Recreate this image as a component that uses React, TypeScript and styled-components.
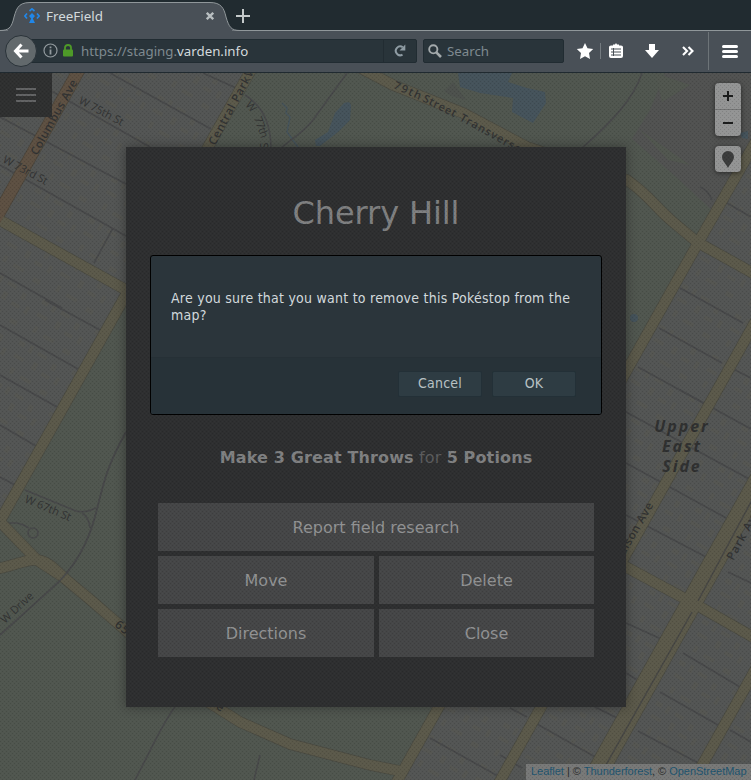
import React from 'react';
import styled, { createGlobalStyle } from 'styled-components';

const GlobalStyle = createGlobalStyle`
  * { box-sizing: border-box; }
  body { margin: 0; background: #4f534e; overflow: hidden; }
  button { font: inherit; letter-spacing: inherit; border: 0; padding: 0; margin: 0; }
`;

const Window = styled.div`
  display: flex;
  flex-direction: column;
  width: 751px;
  height: 780px;
  overflow: hidden;
  font-family: 'DejaVu Sans', sans-serif;
`;

/* ---------- browser chrome ---------- */
const TabStrip = styled.div`
  position: relative;
  display: flex;
  height: 31px;
  background: #212b30;
  border-bottom: 1px solid #90979a;
  font-family: 'Noto Sans', sans-serif;
`;
const TabShape = styled.svg`
  position: absolute;
  left: 0;
  top: 0;
`;
const Tab = styled.div`
  position: relative;
  display: flex;
  align-items: center;
  width: 232px;
  height: 31px;
  padding: 1px 18px 0 24px;
  color: #d3dadd;
  font-size: 13.4px;
  line-height: 18px;
`;
const TabTitle = styled.span`
  flex: 1;
  margin-left: 6px;
`;
const NewTab = styled.svg`
  position: relative;
  margin: 9px 0 0 4px;
`;
const Toolbar = styled.div`
  position: relative;
  display: flex;
  align-items: center;
  height: 42px;
  padding: 0 0 2px 5px;
  background: #495057;
  border-bottom: 1px solid #202a30;
  font-family: 'Noto Sans', sans-serif;
  font-size: 13.3px;
  color: #7f8a90;
  & > * { flex: none; }
`;
const BackButton = styled.button`
  position: relative;
  z-index: 1;
  display: flex;
  align-items: center;
  justify-content: center;
  width: 32px;
  height: 32px;
  border: 1px solid #2a3339;
  border-radius: 50%;
  background: #62696c;
`;
const Field = styled.div<{ $w: number }>`
  display: flex;
  align-items: center;
  width: ${(p) => p.$w}px;
  height: 24px;
  border: 1px solid #212c32;
  border-radius: 2px;
  background: #29343a;
`;
const UrlField = styled(Field)`
  margin-left: -8px;
  padding-left: 13px;
  svg { flex: none; }
`;
const LockIcon = styled.svg`
  margin-left: 5px;
`;
const Url = styled.span`
  flex: 1;
  margin-left: 8px;
  line-height: 18px;
  white-space: nowrap;
  b { font-weight: 400; color: #d3dadd; }
`;
const Reload = styled.div`
  display: flex;
  align-items: center;
  justify-content: center;
  width: 33px;
  height: 22px;
  border-left: 1px solid #222c32;
`;
const SearchField = styled(Field)`
  margin-left: 6px;
  padding-left: 4px;
  gap: 5px;
`;
const ToolIcons = styled.svg`
  margin-left: 6px;
`;

/* ---------- page ---------- */
const Page = styled.main`
  position: relative;
  display: flex;
  align-items: flex-start;
  justify-content: center;
  height: 707px;
  padding-top: 74px;
  overflow: hidden;
`;
const MapCanvas = styled.svg`
  position: absolute;
  inset: 0;
`;
const Mesh = styled.svg`
  position: absolute;
  inset: 0;
  pointer-events: none;
`;
const MenuButton = styled.button`
  position: absolute;
  left: 0;
  top: 0;
  display: flex;
  flex-direction: column;
  justify-content: center;
  gap: 4px;
  width: 52px;
  height: 44px;
  padding: 0 16px;
  background: #2f3030;
`;
const MenuLine = styled.span`
  height: 2px;
  background: #626364;
`;
const Controls = styled.div`
  position: absolute;
  right: 10px;
  top: 10px;
  display: flex;
  flex-direction: column;
  gap: 10px;
`;
const ControlGroup = styled.div`
  display: flex;
  flex-direction: column;
  border-radius: 4px;
  overflow: hidden;
  background: #939494;
  box-shadow: 0 1px 5px rgba(0, 0, 0, 0.5);
`;
const ControlButton = styled.button`
  display: flex;
  align-items: center;
  justify-content: center;
  width: 26px;
  height: 26px;
  background: transparent;
  & + & { height: 27px; border-top: 1px solid #737474; }
`;
const Attribution = styled.div`
  position: absolute;
  right: 0;
  bottom: 0;
  width: 225px;
  height: 16px;
  padding-left: 5px;
  background: #777877;
  color: #2b2c2c;
  font: 11px/15px 'Liberation Sans', Arial, sans-serif;
  letter-spacing: -0.02px;
  white-space: nowrap;
`;
const Link = styled.a`
  color: #1f5570;
`;
const Panel = styled.section`
  position: relative;
  display: flex;
  flex-direction: column;
  width: 500px;
  height: 560px;
  left: 0.5px;
  padding: 44px 32px 50px;
  background: #2e2f30;
  box-shadow: 0 0 10px rgba(20, 20, 20, 0.45);
  text-align: center;
`;
const Title = styled.h1`
  margin: 0;
  color: #7e7f80;
  font-size: 32px;
  font-weight: 400;
  line-height: 45px;
  letter-spacing: -0.1px;
`;
const Research = styled.p`
  margin: auto 0 35px;
  color: #5b5c5d;
  font-size: 16px;
  line-height: 20px;
  letter-spacing: 0.14px;
  b { color: #7f8081; }
`;
const Actions = styled.div`
  display: grid;
  grid-template-columns: 216px 215px;
  gap: 5px;
`;
const Action = styled.button<{ $wide?: boolean }>`
  grid-column: ${(p) => (p.$wide ? '1 / -1' : 'auto')};
  height: 48px;
  background: #454647;
  color: #919293;
  font-size: 16px;
`;
const Dialog = styled.div`
  position: absolute;
  left: 150px;
  top: 182px;
  display: flex;
  flex-direction: column;
  width: 452px;
  height: 160px;
  border: 1px solid #000;
  border-radius: 3px;
  background: #2b353b;
  color: #d2d9dc;
  font-family: 'DejaVu Sans Condensed', 'DejaVu Sans', sans-serif;
  font-stretch: condensed;
  font-size: 14px;
  letter-spacing: 0.24px;
  overflow: hidden;
`;
const Message = styled.div`
  flex: 1;
  padding: 34px 18px 0 20px;
  line-height: 17px;
`;
const DialogFooter = styled.div`
  display: flex;
  justify-content: flex-end;
  gap: 10px;
  height: 57px;
  padding: 13px 25px 0;
  background: #273238;
  border-top: 1px solid #263036;
`;
const DialogButton = styled.button`
  display: flex;
  justify-content: center;
  width: 84px;
  height: 26px;
  border: 1px solid #233037;
  border-radius: 2px;
  background: #2e3c43;
  color: #b8c1c4;
  line-height: 22px;
`;

const AVENUES = [
  'M252 68L0 521', 'M-6 217L128 291',
  'M0 522L8 530L37 560L63 577L93 602L130 634L205 700L240 722L290 744L370 765L405 772',
  'M-5 569C10 567 24 560 34 560C46 560 52 566 63 577',
  'M760 134L698 243L380 812', 'M760 313L490 799',
  'M345 60L393 85L463 113L527 147L627 180C650 196 654 206 673 222L697 242L760 277',
  'M600 553L693 603L760 641', 'M760 661L680 805',
];
const STREETS = [
  'M110 73L211 129', 'M203 73L236 88', 'M20 73L53 92L150 147', 'M0 117L126 184', 'M0 165L126 236',
  'M0 273L62 308', 'M113 228L94 263', 'M45 300L100 330', 'M0 325L78 369', 'M0 375L57 407',
  'M0 425L36 446', 'M0 477L15 485', 'M727 203L751 217', 'M680 288L743 323', 'M659 328L722 363',
  'M638 367L707 405', 'M733 369L751 378', 'M680 390L751 429', 'M626 412L751 480', 'M626 463L728 519',
  'M626 515L708 558', 'M728 572L751 583', 'M626 623L670 643', 'M683 653L740 687', 'M626 673L639 681',
  'M660 692L718 725', 'M595 707L617 718', 'M638 731L700 764', 'M510 708L527 717', 'M537 724L620 771',
  'M730 730L751 742', 'M500 755L522 768', 'M430 738L505 780',
];
const PATHS = [
  'M245 95C260 104 271 120 271 149', 'M347 73L313 120C304 132 290 140 280 149', 'M642 73C634 98 612 122 582 148',
  'M126 432C106 468 104 482 96 513C88 545 72 571 51 589L0 635', 'M25 490L76 511C88 514 92 509 96 508',
  'M82 513Q89 517 90 528', 'M7 523L17 523Q23 524 29 528', 'M175 707C162 724 155 742 135 780',
  'M700 187Q708 190 712 200', 'M260 755L254 780',
];

type LabelProps = { x: number; y: number; r: number; len: number; size?: number; bold?: boolean; children: string };
const MapLabel = ({ x, y, r, len, size = 11, bold, children }: LabelProps) => (
  <text transform={`translate(${x} ${y}) rotate(${r})`} fontSize={size} fontWeight={bold ? 600 : 500} textLength={len}>
    {children}
  </text>
);

const CityMap = () => (
  <MapCanvas width="751" height="707" viewBox="0 73 751 707">
    <defs>
      <pattern id="blocks" width="61" height="47" patternUnits="userSpaceOnUse" patternTransform="rotate(29.5)">
        <path d="M2 4h7v5H2zM14 3h4v8h-4zM24 5h10v4H24zM42 8h5v7h-5zM4 18h11v4H4zM25 16h5v8h-5zM37 21h9v4h-9zM52 18h4v8h-4zM8 31h4v7H8zM20 34h12v4H20zM44 36h8v5h-8z" fill="#585850" opacity=".4" />
      </pattern>
    </defs>
    <rect y="73" width="751" height="707" fill="#535554" />
    <rect y="73" width="751" height="707" fill="url(#blocks)" />
    <path d="M252 73L0 521V780H398L698 243L751 150V73Z" fill="#50564f" />
    <path d="M665 73H751V150L715 213L675 176L632 139L650 110Z" fill="#515251" />
    <path d="M655 73L690 85L662 102ZM640 130L690 165L668 160Z" fill="#51564f" />
    <path d="M444 91L453 82L466 100L452 96ZM150 585L168 598L155 604Z" fill="#4d514d" />
    <g fill="#45535b">
      <path d="M458 73H512L508 82L527 88L545 92L546 103L533 123L512 112L513 98L480 93L460 87Z" />
      <path d="M344 103Q352 100 351 108L350 120L338 132L320 146H316L315 140L328 132L335 113Z" />
      <path d="M740 133L748 131V139L742 138Z" />
      <circle cx="634" cy="318" r="4" />
    </g>
    <path d="M282 103L287 108L286 113L290 117L287 132L298 147" fill="none" stroke="#45535b" strokeWidth="1.4" />
    <g fill="none" stroke="#474849" strokeWidth="1.6">
      {STREETS.map((d) => <path key={d} d={d} />)}
      {PATHS.map((d) => <path key={d} d={d} />)}
      <circle cx="33" cy="533" r="5" />
    </g>
    <g fill="none" stroke="#4a4a41" strokeWidth="11.4">
      {AVENUES.map((d) => <path key={d} d={d} />)}
      <path d="M760 479L590 786" strokeWidth="21.4" />
    </g>
    <path d="M80 68L-6 222" fill="none" stroke="#4b4439" strokeWidth="13" />
    <g fill="none" stroke="#5b594a" strokeWidth="10">
      {AVENUES.map((d) => <path key={d} d={d} />)}
      <path d="M760 479L590 786" strokeWidth="20" />
    </g>
    <path d="M80 68L-6 222" fill="none" stroke="#5d5042" strokeWidth="11.5" />
    <path d="M760 485L698 601M692 612L602 772" stroke="#474744" strokeWidth="1.5" fill="none" />
    <path d="M126 432C106 468 104 482 96 513C88 545 72 571 51 589L0 635" fill="none" stroke="#474849" strokeWidth="1.4" />
    <g fill="#323333" fontFamily="'Open Sans', 'Noto Sans', sans-serif">
      <MapLabel x={37} y={156} r={-61} len={84} size={11.5} bold>Columbus Ave</MapLabel>
      <MapLabel x={78} y={103} r={28} len={49}>W 75th St</MapLabel>
      <MapLabel x={2} y={162} r={28} len={49}>W 73rd St</MapLabel>
      <MapLabel x={215} y={146} r={-62} len={76} size={11.5} bold>Central Park</MapLabel>
      <MapLabel x={251} y={78} r={-62} len={11} size={11.5} bold>W</MapLabel>
      <MapLabel x={245} y={105} r={50} len={11}>W</MapLabel>
      <MapLabel x={254} y={118} r={70} len={22}>77th</MapLabel>
      <MapLabel x={260} y={143} r={85} len={12}>St</MapLabel>
      <MapLabel x={393} y={88} r={24} len={29} size={11} bold>79th</MapLabel>
      <MapLabel x={422} y={101} r={27} len={36} size={11} bold>Street</MapLabel>
      <MapLabel x={459} y={120} r={29} len={68} size={11} bold>Transverse</MapLabel>
      <MapLabel x={24} y={502} r={23} len={49}>W 67th St</MapLabel>
      <MapLabel x={5} y={624} r={-43} len={40}>W Drive</MapLabel>
      <MapLabel x={114} y={626} r={38} len={46} size={12} bold>65th St</MapLabel>
      <MapLabel x={209} y={705} r={30} len={14} size={12} bold>re</MapLabel>
      <MapLabel x={615} y={572} r={-60} len={77} size={11.5} bold>Madison Ave</MapLabel>
      <MapLabel x={733} y={561} r={-61} len={56} size={11.5} bold>Park Ave</MapLabel>
    </g>
    <g fill="#2f3030" fontFamily="'Noto Sans', sans-serif" fontSize="16" fontStyle="italic" fontWeight="700" letterSpacing="1.9" textAnchor="middle">
      <text x="682" y="432">Upper</text>
      <text x="682" y="452">East</text>
      <text x="682" y="472">Side</text>
    </g>
  </MapCanvas>
);

const MeshOverlay = () => (
  <Mesh width="751" height="707" shapeRendering="crispEdges">
    <defs>
      <pattern id="mesh" width="4" height="4" patternUnits="userSpaceOnUse">
        <path d="M0 0h1v1H0zM2 2h1v1H2z" fill="#000" opacity=".12" />
        <path d="M2 0h1v1H2zM0 2h1v1H0z" fill="#fff" opacity=".018" />
      </pattern>
    </defs>
    <rect width="751" height="707" fill="url(#mesh)" />
  </Mesh>
);

export default function App() {
  return (
    <Window>
      <GlobalStyle />
      <TabStrip>
        <TabShape width="751" height="31">
          <path d="M0 30.5C9 30.5 11 27 13 21C16 10 17 2.5 30 2.5H210C221 2.5 224 8 226 17C229 27 231 30.5 240 30.5V31H0Z" fill="#495057" stroke="#90979a" />
          <path d="M8 31H232" stroke="#495057" strokeWidth="2" />
        </TabShape>
        <Tab>
          <svg width="16" height="16" viewBox="0 0 16 16" fill="none" stroke="#2187e8" strokeWidth="1.7">
            <path d="M5.5 3L8 .9L10.5 3M3 5.5L.9 8L3 10.5M13 5.5L15.1 8L13 10.5" />
            <path d="M8 5L11 8L8.8 10.5L11 15H5L7.2 10.5L5 8Z" fill="#2187e8" stroke="none" />
          </svg>
          <TabTitle>FreeField</TabTitle>
          <svg width="8" height="8" viewBox="0 0 8 8" stroke="#b9bfc1" strokeWidth="2.3"><path d="M.8.8L7.2 7.2M7.2.8L.8 7.2" /></svg>
        </Tab>
        <NewTab width="14" height="14" stroke="#c4c9ca" strokeWidth="2"><path d="M7 0V14M0 7H14" /></NewTab>
      </TabStrip>
      <Toolbar>
        <BackButton aria-label="Back">
          <svg width="16" height="16" viewBox="0 0 16 16" fill="none" stroke="#fff" strokeWidth="3"><path d="M8.5 1.5L2.5 8L8.5 14.5M3 8H15.5" /></svg>
        </BackButton>
        <UrlField $w={388}>
          <svg width="15" height="15" viewBox="0 0 15 15" fill="none" stroke="#929a9e" strokeWidth="1.2">
            <circle cx="7.5" cy="7.5" r="6.5" /><path d="M7.5 6.5V11.5M7.5 3.5V5.3" strokeWidth="1.8" />
          </svg>
          <LockIcon width="10" height="13" viewBox="0 0 10 13">
            <path d="M2 6V3.8Q2 1 5 1T8 3.8V6" fill="none" stroke="#4e9a28" strokeWidth="1.8" /><rect y="5.5" width="10" height="7" rx="1" fill="#4e9a28" />
          </LockIcon>
          <Url>https://staging.<b>varden.info</b></Url>
          <Reload>
            <svg width="12" height="13" viewBox="0 0 12 13" fill="none" stroke="#8f9ca4" strokeWidth="2"><path d="M8.5 10.6A4.4 4.4 0 1 1 8.7 3.2" /><path d="M11.3.5V6.5H5.5Z" fill="#8f9ca4" stroke="none" /></svg>
          </Reload>
        </UrlField>
        <SearchField $w={141}>
          <svg width="14" height="14" viewBox="0 0 14 14" fill="none" stroke="#a4aaac" strokeWidth="1.9"><circle cx="5.3" cy="5.3" r="4.1" /><path d="M8.3 8.3L13 13" strokeWidth="2.6" /></svg>
          <span>Search</span>
        </SearchField>
        <ToolIcons width="181" height="40" viewBox="570 31 181 40" fill="#fff">
          <path d="M585 43L587.5 48.2L593.2 49L589 53L590 59L585 56.2L580 59L581 53L576.8 49L582.5 48.2Z" />
          <path d="M600.5 43V59" stroke="#747b80" />
          <path d="M609 47Q609 45.5 611 45.5H613V44.5H615L616 43L617 44.5H619V45.5H621Q623 45.5 623 47V56Q623 58 621 58H611Q609 58 609 56Z" />
          <path d="M611 49H621M611 52H621M611 55H621M613.5 48V56" stroke="#495057" />
          <path d="M649 44H655V50H659L652 58L645 50H649Z" />
          <path d="M683 47L687 51L683 55M688.5 47L692.5 51L688.5 55" fill="none" stroke="#fff" strokeWidth="2.1" />
          <path d="M708.5 32V70" stroke="#6d7478" />
          <path d="M723.5 46.5H736.5M723.5 51.5H736.5M723.5 56.5H736.5" stroke="#fff" strokeWidth="3" strokeLinecap="round" />
        </ToolIcons>
      </Toolbar>
      <Page>
        <CityMap />
        <MenuButton aria-label="Menu"><MenuLine /><MenuLine /><MenuLine /></MenuButton>
        <Controls>
          <ControlGroup>
            <ControlButton aria-label="Zoom in"><svg width="10" height="10" stroke="#1b1c1c" strokeWidth="2"><path d="M5 0V10M0 5H10" /></svg></ControlButton>
            <ControlButton aria-label="Zoom out"><svg width="10" height="10" stroke="#1b1c1c" strokeWidth="2"><path d="M0 5H10" /></svg></ControlButton>
          </ControlGroup>
          <ControlGroup>
            <ControlButton aria-label="Locate"><svg width="12" height="17" viewBox="0 0 12 17" fill="#3b3c3c"><path d="M6 0A6 6 0 0 1 12 6C12 9.5 8 13 6 17C4 13 0 9.5 0 6A6 6 0 0 1 6 0" /></svg></ControlButton>
          </ControlGroup>
        </Controls>
        <Panel>
          <Title>Cherry Hill</Title>
          <Research><b>Make 3 Great Throws</b> for <b>5 Potions</b></Research>
          <Actions>
            <Action $wide>Report field research</Action>
            <Action>Move</Action>
            <Action>Delete</Action>
            <Action>Directions</Action>
            <Action>Close</Action>
          </Actions>
        </Panel>
        <Attribution><Link>Leaflet</Link> | © <Link>Thunderforest</Link>, © <Link>OpenStreetMap</Link></Attribution>
        <MeshOverlay />
        <Dialog role="dialog">
          <Message>Are you sure that you want to remove this Pokéstop from the map?</Message>
          <DialogFooter>
            <DialogButton>Cancel</DialogButton>
            <DialogButton>OK</DialogButton>
          </DialogFooter>
        </Dialog>
      </Page>
    </Window>
  );
}
